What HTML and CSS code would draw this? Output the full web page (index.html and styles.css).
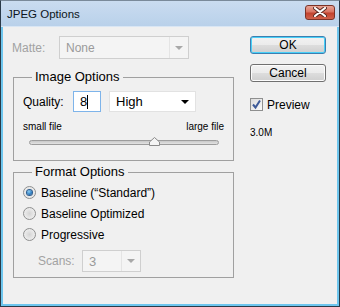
FILE: index.html
```html
<!DOCTYPE html>
<html lang="en">
<head>
    <meta charset="UTF-8">
    <title>JPEG Options</title>
    <link rel="stylesheet" href="styles.css">
</head>
<body>
    <div class="window">
        <div class="titlebar">
            <span class="title">JPEG Options</span>
            <button class="close-button">
                <svg width="14" height="10" viewBox="0 0 14 10">
                    <path d="M2 1 L12 9 M12 1 L2 9" stroke="#5a2a22" stroke-width="4" stroke-linecap="round"/>
                    <path d="M2 1 L12 9 M12 1 L2 9" stroke="#ffffff" stroke-width="2.2" stroke-linecap="round"/>
                </svg>
            </button>
        </div>
        <div class="client">
            <div class="left-column">
                <div class="matte-row">
                    <span class="matte-label">Matte:</span>
                    <div class="select select-disabled matte-select">
                        <span class="select-value">None</span>
                        <span class="select-arrow"><span class="arrow arrow-grey"></span></span>
                    </div>
                </div>

                <fieldset class="group image-group">
                    <legend>Image Options</legend>
                    <div class="quality-row">
                        <span class="quality-label">Quality:</span>
                        <div class="quality-input">8<span class="caret"></span></div>
                        <div class="select high-select">
                            <span class="select-value">High</span>
                            <span class="arrow"></span>
                        </div>
                    </div>
                    <div class="slider-labels">
                        <span>small file</span>
                        <span>large file</span>
                    </div>
                    <div class="slider">
                        <div class="slider-track"></div>
                        <svg class="slider-thumb" width="11" height="9" viewBox="0 0 11 9">
                            <path d="M0.5 8.5 L0.5 5 L5.5 0.5 L10.5 5 L10.5 8.5 Z" fill="#f4f4f4" stroke="#8a8a8a"/>
                        </svg>
                    </div>
                </fieldset>

                <fieldset class="group format-group">
                    <legend>Format Options</legend>
                    <div class="radio-row">
                        <span class="radio radio-checked"></span>
                        <span>Baseline (&ldquo;Standard&rdquo;)</span>
                    </div>
                    <div class="radio-row">
                        <span class="radio"></span>
                        <span>Baseline Optimized</span>
                    </div>
                    <div class="radio-row">
                        <span class="radio"></span>
                        <span>Progressive</span>
                    </div>
                    <div class="scans-row">
                        <span class="scans-label">Scans:</span>
                        <div class="select select-disabled scans-select">
                            <span class="select-value">3</span>
                            <span class="select-arrow"><span class="arrow arrow-grey"></span></span>
                        </div>
                    </div>
                </fieldset>
            </div>

            <div class="right-column">
                <button class="button button-default">OK</button>
                <button class="button">Cancel</button>
                <label class="preview-row">
                    <span class="checkbox">
                        <svg width="11" height="11" viewBox="0 0 11 11">
                            <path d="M2 5.5 L4.5 8.5 L9 1.5" fill="none" stroke="#3d5a98" stroke-width="2"/>
                        </svg>
                    </span>
                    <span>Preview</span>
                </label>
                <div class="file-size">3.0M</div>
            </div>
        </div>
    </div>
</body>
</html>
```

FILE: styles.css
```css
body {
    margin: 0;
    padding: 0;
    font-family: "Liberation Sans", Arial, sans-serif;
    font-size: 12px;
    color: #000;
}

.window {
    width: 340px;
    height: 307px;
    box-sizing: border-box;
    display: flex;
    flex-direction: column;
    background: #6ec6ee;
    border: 1px solid #2a3a48;
    border-top-color: #7a8a9a;
}

.titlebar {
    height: 26px;
    flex-shrink: 0;
    display: flex;
    align-items: center;
    justify-content: space-between;
    padding: 0 4px 0 6px;
    background: linear-gradient(#cadcf0, #b9d1ea);
    border-bottom: 1px solid #d9e6f4;
    box-sizing: border-box;
}

.title {
    font-size: 11.5px;
    color: #0c1520;
    margin-top: 1px;
}

.close-button {
    width: 30px;
    height: 15px;
    margin-top: -3px;
    padding: 0;
    border: 1px solid #7b3328;
    border-radius: 3px;
    background: linear-gradient(#e8a496 0%, #d97462 45%, #c2432f 55%, #d0624c 100%);
    display: flex;
    align-items: center;
    justify-content: center;
}

.client {
    flex: 1;
    margin: 0 2px 2px;
    background: #f0f0f0;
    display: flex;
    gap: 16px;
}

.left-column {
    width: 222px;
    padding-left: 9px;
}

/* Matte */
.matte-row {
    display: flex;
    align-items: center;
    margin-top: 9px;
    height: 23px;
}

.matte-label {
    width: 47px;
    color: #a2a2a2;
}

.select {
    display: flex;
    align-items: center;
    box-sizing: border-box;
    background: #fff;
    border: 1px solid #e2e2e2;
}

.select-value {
    flex: 1;
    padding-left: 6px;
}

.select-disabled {
    background: #f4f4f4;
    border-color: #cfcfcf;
    color: #9a9a9a;
}

.select-arrow {
    align-self: stretch;
    display: flex;
    align-items: center;
    justify-content: center;
    border-left: 1px solid #e4e4e4;
}

.arrow {
    width: 0;
    height: 0;
    border-left: 4px solid transparent;
    border-right: 4px solid transparent;
    border-top: 4px solid #000;
    margin-right: 6px;
}

.select-arrow .arrow {
    margin: 0;
}

.arrow-grey {
    border-top-color: #a8a8a8;
}

.matte-select {
    width: 130px;
    height: 23px;
}

.matte-select .select-arrow {
    width: 18px;
}

/* Group boxes */
.group {
    margin: 10px 0 0 1px;
    padding: 6px 9px 14px 9px;
    width: 221px;
    box-sizing: border-box;
    border: 1px solid #a0a0a0;
    min-width: 0;
}

.group legend {
    font-size: 13px;
    padding: 0 3px;
    margin-left: 9px;
    line-height: 16px;
}

.quality-row {
    display: flex;
    align-items: center;
    height: 21px;
}

.quality-label {
    width: 50px;
}

.quality-input {
    width: 28px;
    height: 21px;
    box-sizing: border-box;
    border: 1px solid #7eb4ea;
    background: #fff;
    display: flex;
    align-items: center;
    padding-left: 6px;
    font-size: 13px;
}

.caret {
    width: 1px;
    height: 14px;
    background: #000;
}

.high-select {
    width: 87px;
    height: 21px;
    margin-left: 8px;
    font-size: 13px;
}

.slider-labels {
    display: flex;
    justify-content: space-between;
    margin-top: 9px;
    font-size: 10px;
    line-height: 12px;
}

.slider {
    position: relative;
    margin: 4px 5px 0 6px;
    height: 9px;
}

.slider-track {
    position: relative;
    top: 3px;
    height: 5px;
    box-sizing: border-box;
    border: 1px solid #9c9c9c;
    border-radius: 3px;
    background: linear-gradient(#c8c8c8, #e2e2e2);
}

.slider-thumb {
    position: absolute;
    top: 0;
    left: 120px;
}

/* Format options */
.format-group {
    margin-top: 3px;
    padding-top: 2px;
    padding-bottom: 5px;
}

.radio-row {
    display: flex;
    align-items: center;
    gap: 5px;
    height: 21px;
}

.radio {
    width: 13px;
    height: 13px;
    box-sizing: border-box;
    border-radius: 50%;
    border: 1px solid #8e8f8f;
    background: radial-gradient(circle at 50% 50%, #d4d4d4 0, #e6e6e6 50%, #f4f4f4 100%);
    display: flex;
    align-items: center;
    justify-content: center;
}

.radio-checked::after {
    content: "";
    width: 5px;
    height: 5px;
    border-radius: 50%;
    background: radial-gradient(circle at 40% 35%, #8ed0f4 0, #2a7ac0 60%, #174a80 100%);
    box-shadow: 0 0 0 1px #2c5d8f;
}

.scans-row {
    display: flex;
    align-items: center;
    margin-top: 5px;
    padding-left: 15px;
    height: 22px;
}

.scans-label {
    width: 44px;
    color: #a2a2a2;
}

.scans-select {
    width: 59px;
    height: 22px;
    font-size: 13px;
}

.scans-select .select-arrow {
    width: 18px;
}

/* Right column */
.right-column {
    display: flex;
    flex-direction: column;
    align-items: flex-start;
    padding-top: 9px;
}

.button {
    width: 76px;
    height: 18px;
    padding: 0;
    font-family: inherit;
    font-size: 12px;
    color: #000;
    border: 1px solid #707070;
    border-radius: 3px;
    background: linear-gradient(#f2f2f2 0%, #ebebeb 50%, #dddddd 51%, #cfcfcf 100%);
    box-shadow: inset 0 0 0 1px #fcfcfc;
    margin-bottom: 10px;
}

.button-default {
    border-color: #3c7fb1;
    box-shadow: inset 0 0 0 1px #48d0f8;
}

.preview-row {
    display: flex;
    align-items: center;
    gap: 4px;
    margin-top: 6px;
    height: 13px;
}

.checkbox {
    width: 13px;
    height: 13px;
    box-sizing: border-box;
    border: 1px solid #8e8f8f;
    background: linear-gradient(135deg, #dcdcdc, #fafafa);
    display: flex;
    align-items: center;
    justify-content: center;
}

.file-size {
    margin-top: 17px;
    font-size: 10px;
    line-height: 10px;
    color: #000;
}
```
